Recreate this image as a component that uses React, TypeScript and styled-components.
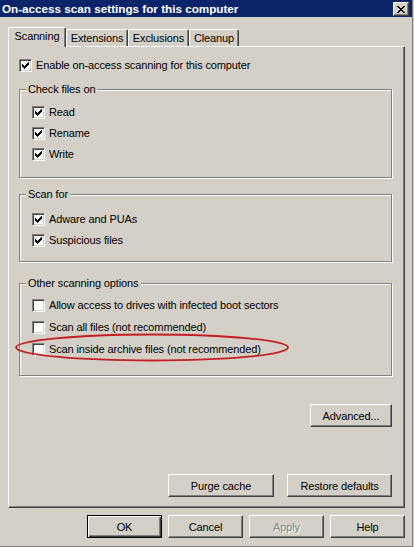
import * as React from "react";
import styled, { createGlobalStyle } from "styled-components";

// Windows classic palette
const face = "#d4d0c8";
const shadow = "#808080";
const darkShadow = "#404040";
const font = `"Liberation Sans", Arial, sans-serif`;

const GlobalStyle = createGlobalStyle`
  html, body {
    margin: 0;
    padding: 0;
    background: ${face};
  }
  body {
    font-family: ${font};
    font-size: 11px;
    letter-spacing: -0.12px;
    color: #000;
  }
`;

const Window = styled.div`
  position: relative;
  box-sizing: border-box;
  width: 413px;
  height: 547px;
  border-right: 1px solid ${shadow};
  border-bottom: 1px solid ${shadow};
  display: flex;
  flex-direction: column;
`;

const TitleBar = styled.div`
  height: 17px;
  flex: none;
  display: flex;
  align-items: flex-start;
  justify-content: space-between;
  padding-left: 2px;
  background: #0a246a;
  color: #fff;
  font-weight: bold;
  font-size: 11.7px;
  letter-spacing: 0;
  line-height: 17px;
  white-space: nowrap;
`;

const CloseButton = styled.div`
  box-sizing: border-box;
  width: 16px;
  height: 14px;
  margin: 2px 3px 0 0;
  display: flex;
  align-items: center;
  justify-content: center;
  background: ${face};
  border: 1px solid;
  border-color: #fff ${darkShadow} ${darkShadow} #fff;
  box-shadow: inset -1px -1px 0 ${shadow};
`;

const Body = styled.div`
  flex: 1;
  display: flex;
  flex-direction: column;
  padding: 10px 7px 8px 8px;
`;

const TabStrip = styled.div`
  display: flex;
  align-items: flex-end;
  height: 19px;
  position: relative;
  z-index: 1;
`;

const Tab = styled.div<{ $w: number; $active?: boolean }>`
  box-sizing: border-box;
  width: ${p => p.$w}px;
  height: ${p => (p.$active ? 20 : 17)}px;
  margin-bottom: ${p => (p.$active ? -1 : 0)}px;
  padding-top: 2px;
  line-height: 13px;
  text-align: center;
  background: ${face};
  border-top: 1px solid #fff;
  border-left: 1px solid #fff;
  border-right: 1px solid ${darkShadow};
  border-radius: 2px 2px 0 0;
  box-shadow: inset -1px 0 0 ${shadow};
`;

const Panel = styled.div`
  box-sizing: border-box;
  height: 462px;
  display: flex;
  flex-direction: column;
  padding: 8px 12px 10px 10px;
  border-top: 1px solid #fff;
  border-left: 1px solid #fff;
  border-right: 1px solid ${darkShadow};
  border-bottom: 1px solid ${darkShadow};
  box-shadow: inset -1px -1px 0 ${shadow};
`;

const Group = styled.fieldset<{ $mt: number; $pt: number; $pb: number }>`
  margin: ${p => p.$mt}px 0 0;
  padding: ${p => p.$pt}px 0 ${p => p.$pb}px 12px;
  min-width: 0;
  border: 1px solid ${shadow};
  box-shadow: inset 1px 1px 0 #fff, 1px 1px 0 #fff;
`;

const Legend = styled.legend`
  margin-left: -6px;
  padding: 0 2px;
  line-height: 13px;
  background: ${face};
`;

const Row = styled.label<{ $h?: number }>`
  display: flex;
  align-items: flex-start;
  height: ${p => p.$h ?? 21}px;
`;

const Box = styled.span`
  box-sizing: border-box;
  flex: none;
  width: 13px;
  height: 13px;
  margin-top: 4px;
  display: flex;
  align-items: center;
  justify-content: center;
  background: #fff;
  border: 1px solid;
  border-color: ${shadow} #fff #fff ${shadow};
  box-shadow: inset 1px 1px 0 ${darkShadow}, inset -1px -1px 0 ${face};
`;

const Text = styled.span`
  margin-left: 4px;
  line-height: 21px;
  white-space: nowrap;
`;

const Button = styled.div<{ $w: number; $default?: boolean; $disabled?: boolean }>`
  box-sizing: border-box;
  flex: none;
  width: ${p => p.$w}px;
  height: 23px;
  display: flex;
  align-items: center;
  justify-content: center;
  background: ${face};
  color: ${p => (p.$disabled ? shadow : "#000")};
  text-shadow: ${p => (p.$disabled ? "1px 1px 0 #fff" : "none")};
  border: 1px solid;
  border-color: ${p => (p.$default ? "#000" : `#fff ${darkShadow} ${darkShadow} #fff`)};
  box-shadow: ${p =>
    p.$default
      ? `inset 1px 1px 0 #fff, inset -1px -1px 0 ${darkShadow}, inset -2px -2px 0 ${shadow}`
      : `inset -1px -1px 0 ${shadow}`};
`;

const AdvancedButton = styled(Button)`
  align-self: flex-end;
  margin-top: 28px;
`;

const PanelFooter = styled.div`
  margin-top: auto;
  display: flex;
  justify-content: flex-end;
  gap: 13px;
`;

const DialogFooter = styled.div`
  margin-top: 7px;
  display: flex;
  justify-content: flex-end;
  gap: 6px;
`;

const Highlight = styled.svg`
  position: absolute;
  left: 14px;
  top: 333px;
  pointer-events: none;
`;

function CheckMark() {
  return (
    <svg width="7" height="7" viewBox="0 0 7 7" shapeRendering="crispEdges">
      <path
        fill="#000"
        d="M6 0h1v3h-1zM5 1h1v3h-1zM4 2h1v3h-1zM3 3h1v3h-1zM2 4h1v3h-1zM1 3h1v3h-1zM0 2h1v3h-1z"
      />
    </svg>
  );
}

function CheckBox({ label, checked, h }: { label: string; checked?: boolean; h?: number }) {
  return (
    <Row $h={h}>
      <Box>{checked && <CheckMark />}</Box>
      <Text>{label}</Text>
    </Row>
  );
}

export default function App() {
  return (
    <>
      <GlobalStyle />
      <Window>
        <TitleBar>
          <span>On-access scan settings for this computer</span>
          <CloseButton>
            <svg width="8" height="7" viewBox="0 0 8 7" shapeRendering="crispEdges">
              <path
                fill="#000"
                d="M0 0h2v1h-2zM6 0h2v1h-2zM1 1h2v1h-2zM5 1h2v1h-2zM2 2h4v1h-4zM3 3h2v1h-2zM2 4h4v1h-4zM1 5h2v1h-2zM5 5h2v1h-2zM0 6h2v1h-2zM6 6h2v1h-2z"
              />
            </svg>
          </CloseButton>
        </TitleBar>
        <Body>
          <TabStrip>
            <Tab $w={58} $active>Scanning</Tab>
            <Tab $w={62}>Extensions</Tab>
            <Tab $w={61}>Exclusions</Tab>
            <Tab $w={50}>Cleanup</Tab>
          </TabStrip>
          <Panel>
            <CheckBox label="Enable on-access scanning for this computer" checked />
            <Group $mt={7} $pt={6} $pb={12}>
              <Legend>Check files on</Legend>
              <CheckBox label="Read" checked />
              <CheckBox label="Rename" checked />
              <CheckBox label="Write" checked />
            </Group>
            <Group $mt={10} $pt={8} $pb={10}>
              <Legend>Scan for</Legend>
              <CheckBox label="Adware and PUAs" checked />
              <CheckBox label="Suspicious files" checked />
            </Group>
            <Group $mt={15} $pt={5} $pb={14}>
              <Legend>Other scanning options</Legend>
              <CheckBox h={22} label="Allow access to drives with infected boot sectors" />
              <CheckBox h={22} label="Scan all files (not recommended)" />
              <CheckBox h={22} label="Scan inside archive files (not recommended)" />
            </Group>
            <AdvancedButton $w={82}>Advanced...</AdvancedButton>
            <PanelFooter>
              <Button $w={106}>Purge cache</Button>
              <Button $w={105}>Restore defaults</Button>
            </PanelFooter>
          </Panel>
          <DialogFooter>
            <Button $w={75} $default>OK</Button>
            <Button $w={75}>Cancel</Button>
            <Button $w={75} $disabled>Apply</Button>
            <Button $w={75}>Help</Button>
          </DialogFooter>
        </Body>
        <Highlight width="276" height="29" viewBox="0 0 276 29">
          <ellipse cx="138" cy="14.5" rx="136" ry="13" fill="none" stroke="#c41e24" strokeWidth="1.8" />
        </Highlight>
      </Window>
    </>
  );
}
